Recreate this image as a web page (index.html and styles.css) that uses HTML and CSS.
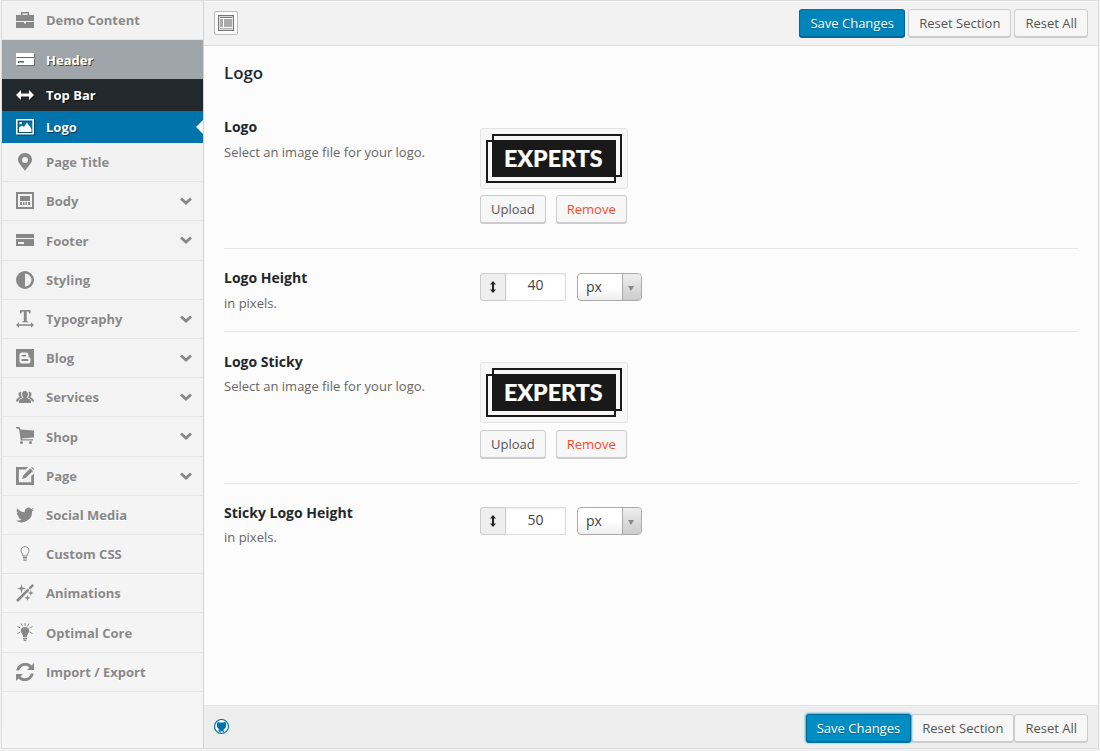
FILE: index.html
```
<!DOCTYPE html>
<html lang="en">
<head>
<meta charset="utf-8">
<title>Theme Options</title>
<link rel="stylesheet" href="styles.css">
</head>
<body>
<div class="panel">
  <nav class="sidebar">
    <a class="item"><svg class="icon" viewBox="0 0 18 18"><path d="M5 4V1h8v3h5v6H0V4zM6.500 4h5V2.500h-5zM0 11h8v1.500h2V11h8v6H0z" fill-rule="evenodd"/></svg><span>Demo Content</span></a>
    <a class="item current"><svg class="icon" viewBox="0 0 18 18"><path d="M0 3h18v4H0zM0 8h18v7H0zM2 11v2h6v-2z" fill-rule="evenodd"/></svg><span>Header</span></a>
    <a class="item sub"><svg class="icon" viewBox="0 0 18 18"><path d="M0 9l5-5v3.500h8V4l5 5-5 5v-3.500H5V14z"/></svg><span>Top Bar</span></a>
    <a class="item sub selected"><svg class="icon" viewBox="0 0 18 18"><path d="M0 1h18v15.500H0zM1.600 2.600v12.300h14.800V2.600zM3 14V9.500l3-2 2 1.500 3-4.500 2 3 1 1L15.500 11v3zM3.500 4h2.300v2.300H3.500z" fill-rule="evenodd"/></svg><span>Logo</span></a>
    <a class="item"><svg class="icon" viewBox="0 0 18 18"><path d="M9 0c4 0 7 2.900 7 6.700C16 10.500 11 14 9 18 7 14 2 10.500 2 6.700 2 2.900 5 0 9 0zm0 4a3 3 0 1 0 0 6 3 3 0 0 0 0-6z" fill-rule="evenodd"/></svg><span>Page Title</span></a>
    <a class="item"><svg class="icon" viewBox="0 0 18 18"><path d="M0 0h18v17H0zM2 2v13h14V2zM4 4h10v5H4z" fill-rule="evenodd"/><path d="M4 10h2v3H4zM7 10h1.500v3H7zM9.500 10H11v3H9.500zM12 10h2v3h-2z"/></svg><span>Body</span><svg class="chevron" viewBox="0 0 12 8"><path d="M1 1.500l5 4.500 5-4.500"/></svg></a>
    <a class="item tall"><svg class="icon" viewBox="0 0 18 18"><path d="M0 3h18v4H0zM0 8h18v7H0zM2 11v2h6v-2z" fill-rule="evenodd"/></svg><span>Footer</span><svg class="chevron" viewBox="0 0 12 8"><path d="M1 1.500l5 4.500 5-4.500"/></svg></a>
    <a class="item"><svg class="icon" viewBox="0 0 18 18"><path d="M9 0a9 9 0 1 0 0 18A9 9 0 0 0 9 0zm0 2.500a6.500 6.500 0 0 1 0 13z" fill-rule="evenodd"/></svg><span>Styling</span></a>
    <a class="item"><svg class="icon" viewBox="0 0 18 18"><path d="M4 0h10.500v3.500h-1.300L12.500 1.500h-1.800V11l1.500.5v.8H6.300v-.8L7.800 11V1.500H6L5.300 3.500H4zM0 15l3-2.700v1.900h12v-1.900l3 2.700-3 2.700v-1.900H3v1.900z"/></svg><span>Typography</span><svg class="chevron" viewBox="0 0 12 8"><path d="M1 1.500l5 4.500 5-4.500"/></svg></a>
    <a class="item"><svg class="icon" viewBox="0 0 18 18"><path d="M0 0h18v18H0zM6 3.500Q3.500 3.500 3.500 6v6q0 2.500 2.500 2.500h6q2.500 0 2.500-2.500v-2q0-1.500-1.500-1.800Q12.500 8 12.500 6.500q0-3-3-3zM6.300 6h3q1 0 1 .8t-1 .8h-3q-.8 0-.8-.8t.8-.8zM6.300 10h5.200q1 0 1 1t-1 1H6.300q-1 0-1-1t1-1z" fill-rule="evenodd"/></svg><span>Blog</span><svg class="chevron" viewBox="0 0 12 8"><path d="M1 1.500l5 4.500 5-4.500"/></svg></a>
    <a class="item"><svg class="icon" viewBox="0 0 18 18"><path d="M9 3c2 0 3 1.300 3 3.200 0 1.500-.6 2.400-1.300 3 .2 1.300 4.300 1.300 4.300 4.300v1.500H3v-1.500c0-3 4.100-3 4.300-4.300C6.600 8.600 6 7.700 6 6.200 6 4.300 7 3 9 3zM5.600 3.700C3.600 3.400 2.300 4.600 2.500 6.500c.1 1 .5 1.700 1 2.200C3.500 10 0 9.700 0 13.500h2.200c.3-2.500 2-3.100 3.600-3.800.5-.3.300-.6 0-1C4.900 7.500 4.700 5 5.600 3.700zM12.400 3.700c2-.3 3.300.9 3.100 2.800-.1 1-.5 1.700-1 2.200 0 1.300 3.500 1 3.500 4.800h-2.200c-.3-2.500-2-3.100-3.600-3.800-.5-.3-.3-.6 0-1 .9-1.200 1.100-3.700.2-5z"/></svg><span>Services</span><svg class="chevron" viewBox="0 0 12 8"><path d="M1 1.500l5 4.500 5-4.500"/></svg></a>
    <a class="item tall"><svg class="icon" viewBox="0 0 18 18"><path d="M0 0h3.500l1 2.500L18 3.500v7L6 11.500v.8h11v1.200H4.500v-2L3 2 0 1.300z"/><circle cx="5.500" cy="15.500" r="1.500"/><circle cx="14.500" cy="15.500" r="1.500"/></svg><span>Shop</span><svg class="chevron" viewBox="0 0 12 8"><path d="M1 1.500l5 4.500 5-4.500"/></svg></a>
    <a class="item"><svg class="icon" viewBox="0 0 18 18"><path d="M0 0h12l-2 2.500H2.800v12.700h12.400V9L18 6.500V18H0zM14.200 1.200L17 4l-7.300 7L6 12l1.200-3.600zM15 .5l1-.5L18 1.800l-.6 1.200z"/></svg><span>Page</span><svg class="chevron" viewBox="0 0 12 8"><path d="M1 1.500l5 4.500 5-4.500"/></svg></a>
    <a class="item"><svg class="icon" viewBox="0 0 24 24"><path d="M24 4.600a10 10 0 0 1-2.800.8 4.900 4.900 0 0 0 2.100-2.700c-1 .6-2 1-3.100 1.200a4.900 4.900 0 0 0-8.400 4.500A14 14 0 0 1 1.700 3.200 4.900 4.900 0 0 0 3.200 9.700a5 5 0 0 1-2.200-.6c0 2.300 1.600 4.400 3.900 4.900-.7.200-1.500.2-2.200.1a4.900 4.900 0 0 0 4.600 3.400A10 10 0 0 1 0 19.500 14 14 0 0 0 21.500 7.100 10 10 0 0 0 24 4.600z"/></svg><span>Social Media</span></a>
    <a class="item"><svg class="icon" viewBox="0 0 18 18"><path class="line" d="M7 11C7 8.500 5 8 5 5.200 5 3 6.800 1.700 9 1.700S13 3 13 5.200C13 8 11 8.500 11 11z"/><path d="M7 12h4v1.500H7zM7 14.500h4l-.5 1.200h-3z"/></svg><span>Custom CSS</span></a>
    <a class="item"><svg class="icon" viewBox="0 0 18 18"><path d="M0 16L11.800 4.500l1.700 1.700L2 18zM12.600 3.800L16.300 0 18 1.700 14.300 5.500zM5.500 0l1 3.600 3.500 1-3.500 1L5.500 9.500l-1-3.900L1 4.600l3.500-1zM14.800 6l.8 2.200L18 9l-2.400.8-.8 2.200-.8-2.200L11.500 9l2.500-.8zM11.500 11l.7 2.100 2.300.9-2.300.8-.7 2.200-.8-2.200L8.500 14l2.200-.9z"/></svg><span>Animations</span></a>
    <a class="item tall"><svg class="icon" viewBox="0 0 18 18"><path d="M9 4c2.500 0 4.300 1.600 4.300 3.800C13.300 10 11 11 11 14H7c0-3-2.300-4-2.300-6.200C4.700 5.600 6.500 4 9 4zM7 14.700h4v1.200H7zM7.200 16.500h3.600L10 18H8z"/><path class="line" d="M9 0v3M5 .5l1.500 2.800M13 .5l-1.500 2.800M1.500 3.500L4.300 5M16.500 3.500L13.700 5M1.500 10.500L4.300 9M16.500 10.500L13.700 9"/></svg><span>Optimal Core</span></a>
    <a class="item"><svg class="icon" viewBox="0 0 18 18"><path d="M18 0v7h-7l2.500-2.500C10.500 1.500 5 2 3 7.500H.3C1.700 0 10.500-2.500 15.500 2.500zM0 18v-7h7l-2.500 2.500c3 3 8.500 2.500 10.500-3h2.700C16.300 18 7.500 20.500 2.500 15.500z"/></svg><span>Import / Export</span></a>
  </nav>
  <main class="main">
    <header class="bar top">
      <button class="expand" aria-label="Expand"><svg viewBox="0 0 16 16"><path d="M0 0h16v16H0zM1.200 1.200v13.600h13.600V1.200zM2 2h12v1H2z" fill-rule="evenodd"/><path class="panes" d="M2 4h3v8H2zM6 4h8v8H6zM2 13h12v1H2z"/></svg></button>
      <div class="actions"><button class="btn primary">Save Changes</button><button class="btn">Reset Section</button><button class="btn">Reset All</button></div>
    </header>
    <div class="content">
      <h3 class="heading">Logo</h3>
      <section class="field media">
        <div class="label"><b>Logo</b><p>Select an image file for your logo.</p></div>
        <div>
          <div class="preview"><svg viewBox="0 0 136 49"><path class="frame" d="M1 7h128v41H1zM7 1h128v41H7z"/><path class="plate" d="M6 6h124v37H6z"/><text x="18" y="33" textLength="98.500" lengthAdjust="spacingAndGlyphs">EXPERTS</text></svg></div>
          <div class="media-buttons"><button class="btn">Upload</button><button class="btn remove">Remove</button></div>
        </div>
      </section>
      <section class="field size">
        <div class="label"><b>Logo Height</b><p>in pixels.</p></div>
        <div class="dimension"><span class="addon"><svg viewBox="0 0 6 12"><path d="M3 0l3 3.500H4v5h2L3 12 0 8.500h2v-5H0z"/></svg></span><span class="number">40</span><span class="select"><span>px</span><i><svg viewBox="0 0 6 5"><path d="M0 0h6L3 5z"/></svg></i></span></div>
      </section>
      <section class="field media second">
        <div class="label"><b>Logo Sticky</b><p>Select an image file for your logo.</p></div>
        <div>
          <div class="preview"><svg viewBox="0 0 136 49"><path class="frame" d="M1 7h128v41H1zM7 1h128v41H7z"/><path class="plate" d="M6 6h124v37H6z"/><text x="18" y="33" textLength="98.500" lengthAdjust="spacingAndGlyphs">EXPERTS</text></svg></div>
          <div class="media-buttons"><button class="btn">Upload</button><button class="btn remove">Remove</button></div>
        </div>
      </section>
      <section class="field size last">
        <div class="label"><b>Sticky Logo Height</b><p>in pixels.</p></div>
        <div class="dimension"><span class="addon"><svg viewBox="0 0 6 12"><path d="M3 0l3 3.500H4v5h2L3 12 0 8.500h2v-5H0z"/></svg></span><span class="number">50</span><span class="select"><span>px</span><i><svg viewBox="0 0 6 5"><path d="M0 0h6L3 5z"/></svg></i></span></div>
      </section>
    </div>
    <footer class="bar bottom">
      <svg class="github" viewBox="0 0 16 16"><circle cx="7.500" cy="7.500" r="7"/><path d="M3.500 2.700l1.700.7h4.600l1.700-.7.5 2c.8 2.800-.5 4.800-2.300 5.300v3.500l-1 .5v-1.800H6.500V14l-1.200-.5v-1.200L3.800 10.500l1.500.4V10C3.500 9.500 2.200 7.500 3 4.700z"/></svg>
      <div class="actions"><button class="btn primary focus">Save Changes</button><button class="btn">Reset Section</button><button class="btn">Reset All</button></div>
    </footer>
  </main>
</div>
</body>
</html>
```
FILE: styles.css
```
* { box-sizing: border-box; }
body { margin: 0; padding: 0 1px; background: #f1f1f1; font: 13px/18px "Open Sans", sans-serif; color: #555; }
.panel { display: flex; width: 1098px; height: 749px; border: 1px solid #ddd; background: #f3f3f3; }
.sidebar { width: 202px; flex: none; border-right: 1px solid #d3d3d3; background: linear-gradient(#f2f2f2, #f5f5f5); }
.item { display: flex; position: relative; align-items: flex-start; height: 39px; padding: 10px 11px 0 14px; border-bottom: 1px solid #e7e7e7; color: #888; font-weight: 700; text-shadow: 0 1px #fff; }
.item.tall { height: 40px; }
.tall span { padding-top: 1px; }
.item span { flex: 1; margin-left: 12px; }
.icon { width: 18px; height: 18px; flex: none; fill: #888; }
.icon .line { fill: none; stroke: #888; stroke-width: 1; }
.chevron { width: 12px; height: 8px; margin-top: 5px; fill: none; stroke: #888; stroke-width: 2.800; }
.item.current { padding-top: 10px; background: #a0a5aa; border: 0; color: #fff; text-shadow: 1px 1px #444; }
.current span { padding-top: 1px; }
.item.sub { height: 32px; padding-top: 7px; background: #23282d; border: 0; color: #fff; text-shadow: 1px 1px #111; }
.item.selected { background: #0073aa; text-shadow: 1px 1px #003a58; }
.current .icon, .sub .icon { fill: #fff; filter: drop-shadow(1px 1px 0 rgba(0,0,0,.35)); }
.selected::after { content: ""; position: absolute; right: 0; top: 9px; border: 7px solid transparent; border-left: 0; border-right-color: #fcfcfc; }
.main { flex: 1; display: flex; flex-direction: column; background: #fcfcfc; }
.bar { display: flex; justify-content: space-between; align-items: flex-start; padding: 8px 10px 0; }
.top { height: 45px; background: #f2f2f2; border-bottom: 1px solid #dedede; box-shadow: inset 0 1px #fcfcfc; }
.bottom { height: 43px; margin-top: auto; padding-top: 8px; background: #eee; border-top: 1px solid #e3e3e3; }
.actions { display: flex; gap: 3px; }
.bottom .actions { gap: 0; }
.btn { height: 28px; padding: 0 10px 1px; border: 1px solid #ccc; border-radius: 3px; background: #f7f7f7; box-shadow: 0 1px #ccc; color: #555; font: 13px/26px "Open Sans", sans-serif; white-space: nowrap; }
.primary { width: 106px; background: #0085ba; border-color: #0073aa #006799 #006799; box-shadow: 0 1px #006799; color: #fff; text-shadow: 0 1px 1px #006799; }
.focus { width: auto; background: #008ec2; border-color: #006799; box-shadow: 0 1px #0073aa, 0 0 2px 1px #33b3db; position: relative; }
.expand { width: 24px; height: 24px; margin-top: 2px; padding: 3px; border: 1px solid #bbb; border-radius: 2px; background: #fcfcfc; }
.expand svg { display: block; width: 16px; height: 16px; fill: #777; }
.expand .panes { fill: #aaa; }
.content { padding: 0 20px; }
.heading { height: 57px; margin: 0; padding-top: 17px; color: #23282d; font: 600 16.900px/20px "Open Sans", sans-serif; }
.field { display: grid; grid-template-columns: 256px 1fr; border-bottom: 1px solid #e7e7e7; }
.media { height: 146px; padding-top: 25px; }
.media.second { height: 152px; padding-top: 30px; }
.size { height: 83px; padding-top: 24px; }
.size.last { padding-top: 23px; border: 0; }
.label { margin-top: -10px; }
.size .label { padding-top: 6px; }
.label b { display: block; color: #23282d; font-size: 14px; }
.label p { margin: 7px 0 0; color: #666; }
.second .label { padding-top: 1px; }
.last .label { padding-top: 7px; }
.second p, .last p { margin-top: 6px; }
.preview { width: 148px; height: 61px; padding: 5px; border: 1px solid #e3e3e3; border-radius: 3px; background: #f7f7f7; }
.preview svg { display: block; width: 136px; height: 49px; }
.frame { fill: none; stroke: #191919; stroke-width: 2; }
.plate { fill: #191919; }
.preview text { fill: #fff; stroke: #fff; stroke-width: .2; font: 900 22px Lato, sans-serif; }
.media-buttons { display: flex; gap: 10px; margin-top: 6px; }
.second .media-buttons { margin-top: 7px; }
.remove { color: #fb4a1c; }
.dimension { display: flex; height: 28px; }
.addon { display: flex; width: 26px; align-items: center; justify-content: center; background: #eee; border: 1px solid #ccc; border-radius: 3px 0 0 3px; }
.addon svg { width: 6px; height: 12px; fill: #222; }
.number { width: 60px; border: 1px solid #ddd; border-left: 0; background: #fff; box-shadow: inset 0 1px 2px rgba(0,0,0,.07); color: #444; font-size: 14px; line-height: 22px; text-align: center; }
.last .number { line-height: 23px; }
.select { display: flex; width: 65px; margin-left: 11px; border: 1px solid #aaa; border-radius: 4px; overflow: hidden; background: linear-gradient(#fff 50%, #eee); color: #444; font-size: 14px; line-height: 26px; }
.select span { flex: 1; padding-left: 8px; }
.select i { display: flex; width: 19px; align-items: center; justify-content: center; padding: 3px 2px 0 0; border-left: 1px solid #aaa; background: linear-gradient(#eee, #ccc); }
.select svg { width: 6px; height: 5px; fill: #888; }
.github { width: 16px; height: 16px; margin-top: 5px; fill: #0073aa; }
.github circle { fill: #fff; stroke: #0073aa; stroke-width: 1.200; }
```
